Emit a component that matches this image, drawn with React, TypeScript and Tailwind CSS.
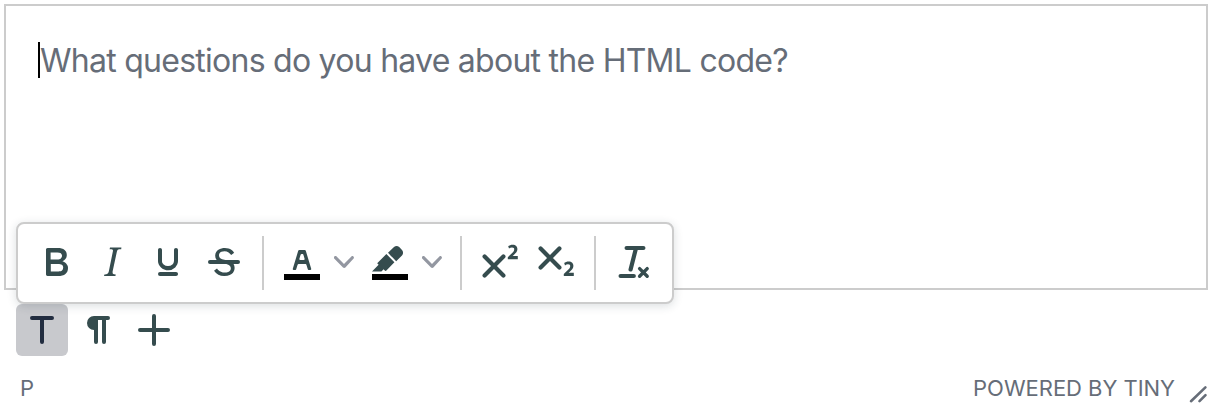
import type { ReactNode } from 'react';

type IconProps = { label: string; children: ReactNode; className?: string };

function ToolButton({ label, children, className = '' }: IconProps) {
  return (
    <button type="button" aria-label={label} className={`flex h-12 w-12 shrink-0 items-center justify-center ${className}`}>
      <svg viewBox="0 0 24 24" className="h-12 w-12" fill="currentColor" fillRule="evenodd">
        {children}
      </svg>
    </button>
  );
}

function Separator() {
  return <div className="mt-0.5 h-[54px] w-0.5 shrink-0 bg-[#ccc]" />;
}

function Chevron({ className }: { className: string }) {
  return (
    <svg viewBox="0 0 10 10" className={`h-5 w-5 shrink-0 text-[#9397a1] ${className}`} fill="currentColor">
      <path d="M8.7 2.2c.3-.3.8-.3 1 0 .4.4.4.9 0 1.2L5.7 7.8c-.3.3-.9.3-1.2 0L.2 3.4a.8.8 0 0 1 0-1.2c.3-.3.8-.3 1.1 0L5 6l3.7-3.8Z" />
    </svg>
  );
}

const two =
  'M20.9 10.6h-5v-1l1-1 1.7-1.6c.3-.5.5-.9.5-1.3 0-.3 0-.5-.2-.7-.2-.2-.5-.3-.9-.3l-.8.2-.7.4-.4-1.2c.2-.2.5-.4 1-.5.3-.2.8-.2 1.2-.2.8 0 1.4.2 1.8.6.4.4.6 1 .6 1.6 0 .5-.2 1-.5 1.5l-1.3 1.4-.6.5h2.6v1.6Z';

function FormatToolbar() {
  return (
    <div className="absolute left-4 top-[222px] flex h-[82px] w-[658px] items-center rounded-lg border-2 border-[#ccc] bg-white pb-0.5 pl-3.5 text-[#354c4e] shadow-[0_2px_10px_rgba(34,47,62,0.16)]">
      <div className="flex gap-2">
        <ToolButton label="Bold">
          <path d="M7.8 19c-.3 0-.5 0-.6-.2l-.2-.5V5.7c0-.2 0-.4.2-.5l.6-.2h5c1.5 0 2.7.3 3.5 1 .7.6 1.1 1.4 1.1 2.5a3 3 0 0 1-.6 1.9c-.4.6-1 1-1.6 1.2.4.1.9.3 1.3.6s.8.7 1 1.2c.4.4.5 1 .5 1.6 0 1.3-.4 2.3-1.3 3-.8.7-2.1 1-3.8 1H7.8Zm5-8.3c.6 0 1.2-.1 1.6-.5.4-.3.6-.7.6-1.3 0-1.1-.8-1.7-2.3-1.7H9.3v3.5h3.4Zm.5 6c.7 0 1.3-.1 1.7-.4.4-.4.6-.9.6-1.5s-.2-1-.7-1.4c-.4-.3-1-.4-2-.4H9.4v3.8h4Z" />
        </ToolButton>
        <ToolButton label="Italic">
          <path d="m16.7 4.7-.1.9h-.3c-.6 0-1 0-1.4.3-.3.3-.4.6-.5 1.1l-2.1 9.8v.6c0 .5.4.8 1.4.8h.2l-.2.8H8l.2-.8h.2c1.1 0 1.8-.5 2-1.5l2-9.8.1-.5c0-.6-.4-.8-1.4-.8h-.3l.2-.9h5.8Z" />
        </ToolButton>
        <ToolButton label="Underline">
          <path d="M16 5c.6 0 1 .4 1 1v5.5a4 4 0 0 1-.4 1.8l-1 1.4a5.3 5.3 0 0 1-5.5 1 5 5 0 0 1-1.6-1c-.5-.4-.8-.9-1.1-1.4a4 4 0 0 1-.4-1.8V6c0-.6.4-1 1-1s1 .4 1 1v5.5c0 .3 0 .6.2 1l.6.7a3.3 3.3 0 0 0 2.2.8 3.4 3.4 0 0 0 2.2-.8c.3-.2.4-.5.6-.8l.2-.9V6c0-.6.4-1 1-1ZM8 17h8c.6 0 1 .4 1 1s-.4 1-1 1H8a1 1 0 0 1 0-2Z" />
        </ToolButton>
        <ToolButton label="Strikethrough">
          <path d="M15.6 8.5c-.5-.7-1-1.1-1.3-1.3-.6-.4-1.3-.6-2-.6-2.7 0-2.8 1.7-2.8 2.1 0 1.6 1.8 2 3.2 2.3 4.4.9 4.6 2.8 4.6 3.9 0 1.4-.7 4.1-5 4.1A6.2 6.2 0 0 1 7 16.4l1.5-1.1c.4.6 1.6 2 3.7 2 1.6 0 2.5-.4 3-1.2.4-.8.3-2-.8-2.6-.7-.4-1.6-.7-2.9-1-1-.2-3.9-.8-3.9-3.6C7.6 6 10.3 5 12.4 5c2.9 0 4.2 1.6 4.7 2.4l-1.5 1.1Z" />
          <path d="M5 11h14a1 1 0 0 1 0 2H5a1 1 0 0 1 0-2Z" />
        </ToolButton>
      </div>
      <div className="ml-3.5 flex items-center">
        <Separator />
        <ToolButton label="Text color" className="ml-3.5">
          <path fill="#000" d="M3 18h18v3H3z" />
          <path d="M8.7 16h-.8a.5.5 0 0 1-.5-.6l2.7-9c.1-.3.3-.4.5-.4h2.8c.2 0 .4.1.5.4l2.7 9a.5.5 0 0 1-.5.6h-.8a.5.5 0 0 1-.4-.4l-.7-2.2c0-.3-.3-.4-.5-.4h-3.4c-.2 0-.4.1-.5.4l-.7 2.2c0 .3-.2.4-.4.4Zm2.6-7.6-.6 2a.5.5 0 0 0 .5.6h1.6a.5.5 0 0 0 .5-.6l-.6-2c0-.3-.3-.4-.5-.4h-.4c-.2 0-.4.1-.5.4Z" />
        </ToolButton>
        <Chevron className="ml-2" />
        <ToolButton label="Background color" className="ml-3">
          <path fill="#000" d="M3 18h18v3H3z" />
          <path d="M7.7 16.7H3l3.3-3.3-.7-.8L10.2 8l4 4.1-4 4.2c-.2.2-.6.2-.8 0l-.6-.7-1.1 1.1Zm5-7.5L11 7.4l3-2.9a2 2 0 0 1 2.6 0L18 6c.7.7.7 2 0 2.7l-2.9 2.9-1.8-1.8-.5-.6Z" />
        </ToolButton>
        <Chevron className="ml-2" />
      </div>
      <div className="ml-[18px] flex items-center">
        <Separator />
        <ToolButton label="Superscript" className="ml-3.5">
          <path d="M4.3 9.3l9.4 9.4M13.7 9.3l-9.4 9.4" fill="none" stroke="currentColor" strokeWidth="2.1" strokeLinecap="round" />
          <path d={two} />
        </ToolButton>
        <ToolButton label="Subscript" className="ml-2">
          <path d="M4.3 5.3l9.4 9.4M13.7 5.3l-9.4 9.4" fill="none" stroke="currentColor" strokeWidth="2.1" strokeLinecap="round" />
          <path d={two} transform="translate(0 8.4)" />
        </ToolButton>
      </div>
      <div className="ml-3.5 flex items-center">
        <Separator />
        <ToolButton label="Clear formatting" className="ml-3.5">
          <g fill="none" stroke="currentColor" strokeWidth="2" strokeLinecap="round">
            <path d="M8.3 5h8.4M5.3 19h6.6M12.9 5.5l-2.6 10.2" strokeWidth="2.1" />
            <path d="M14.8 15.3l3.8 3.8M18.6 15.3l-3.8 3.8" strokeWidth="1.7" />
          </g>
        </ToolButton>
      </div>
    </div>
  );
}

export default function App() {
  return (
    <div className="relative flex h-[410px] w-[1212px] flex-col overflow-hidden bg-white pt-1 font-['Inter','Liberation_Sans',sans-serif]">
      <div className="mx-1 h-[286px] shrink-0 border-2 border-[#ccc] px-8 pt-9">
        <div className="flex h-9">
          <div className="h-9 w-0.5 shrink-0 bg-black" />
          <p className="whitespace-nowrap pt-px text-[32px] leading-9 tracking-[-0.74px] text-[#666d78]">
            What questions do you have about the HTML code?
          </p>
        </div>
      </div>

      <div className="mt-3.5 flex h-[52px] shrink-0 items-center gap-1 pl-4 text-[#354c4e]">
        <button type="button" aria-label="Text formatting" className="flex h-[52px] w-[52px] items-center justify-center rounded-md bg-[#c8c9cd] text-[#222d40]">
          <svg viewBox="0 0 52 52" className="h-[52px] w-[52px]">
            <path d="M16 14h20M26 14v24" fill="none" stroke="currentColor" strokeWidth="4" strokeLinecap="round" />
          </svg>
        </button>
        <button type="button" aria-label="Paragraph" className="h-[52px] w-[52px]">
          <svg viewBox="0 0 52 52" className="h-[52px] w-[52px]" fill="currentColor">
            <path d="M22 12h14a2 2 0 0 1 0 4h-2v22a2 2 0 0 1-4 0V16h-4v22a2 2 0 0 1-4 0V26a7 7 0 0 1 0-14Z" />
          </svg>
        </button>
        <button type="button" aria-label="Insert" className="h-[52px] w-[52px]">
          <svg viewBox="0 0 52 52" className="h-[52px] w-[52px]">
            <path d="M12 26h28M26 12v28" fill="none" stroke="currentColor" strokeWidth="4" strokeLinecap="round" />
          </svg>
        </button>
      </div>

      <div className="mt-[18px] flex h-8 items-start pl-5 pr-1 text-[22px] leading-7 text-[#666d78]">
        <span>P</span>
        <span className="ml-auto whitespace-nowrap tracking-[-0.03px]">POWERED BY TINY</span>
        <svg viewBox="0 0 20 20" className="ml-[13px] mt-2.5 h-5 w-5 shrink-0">
          <path d="M3 17.2 17.4 3.4M11.5 17.2l6-6" fill="none" stroke="currentColor" strokeWidth="2.6" strokeLinecap="round" />
        </svg>
      </div>

      <FormatToolbar />
    </div>
  );
}
